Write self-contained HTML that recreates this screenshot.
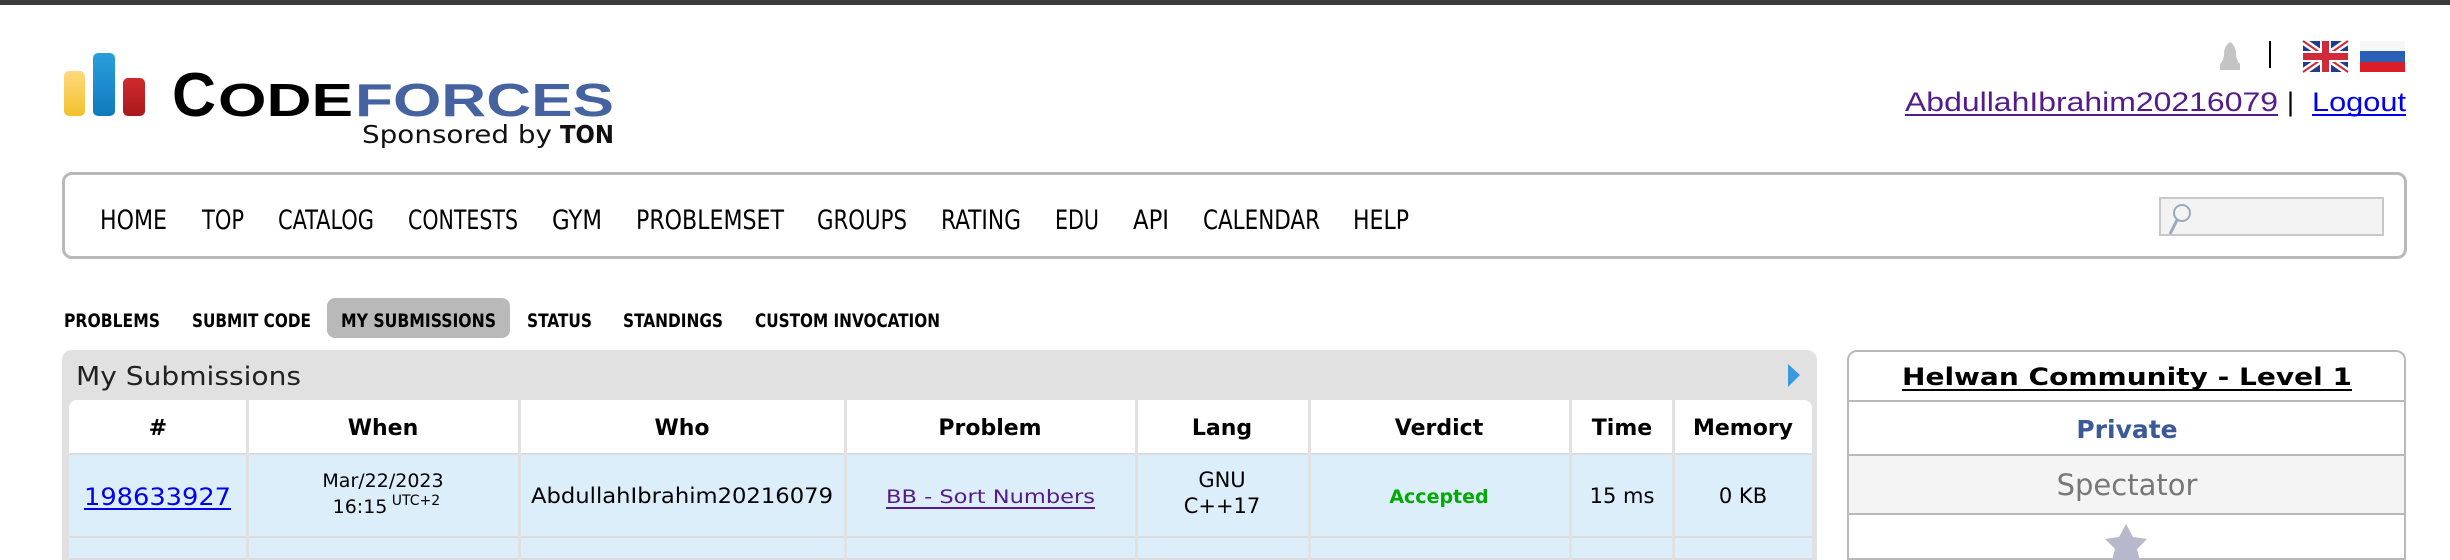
<!DOCTYPE html>
<html><head><meta charset="utf-8"><style>
*{margin:0;padding:0;box-sizing:border-box}
body{width:2450px;height:552px;overflow:hidden;background:#fff;position:relative;font-family:"Liberation Sans",sans-serif}
.a{position:absolute}
svg{position:absolute;overflow:visible}
.nav text{font-family:"Liberation Sans Narrow","DejaVu Sans Condensed","Liberation Sans",sans-serif;font-size:27px;fill:#000}
.sub text{font-family:"Liberation Sans Narrow","DejaVu Sans Condensed","Liberation Sans",sans-serif;font-size:19px;font-weight:bold;fill:#000}
.t text{font-family:"DejaVu Sans","Liberation Sans",sans-serif}
</style></head><body>
<div class="a" style="left:0;top:0;width:2450px;height:5px;background:#3b3b3b"></div>

<!-- logo -->
<div class="a" style="left:64px;top:71px;width:21px;height:45px;border-radius:5px;background:linear-gradient(#fdd97d,#f3c12d)"></div>
<div class="a" style="left:93px;top:53px;width:22px;height:63px;border-radius:5px;background:linear-gradient(#29a0dc,#1179bd)"></div>
<div class="a" style="left:123px;top:78px;width:22px;height:38px;border-radius:5px;background:linear-gradient(#d02a2e,#a8191d)"></div>
<svg width="2450" height="552" style="left:0;top:0">
<text x="172" y="116" font-family="Liberation Sans,sans-serif" font-weight="bold" font-size="62" fill="#000" textLength="44" lengthAdjust="spacingAndGlyphs">C</text>
<text x="218" y="116" font-family="Liberation Sans,sans-serif" font-weight="bold" font-size="46" fill="#000" textLength="135" lengthAdjust="spacingAndGlyphs">ODE</text>
<text x="355" y="116" font-family="Liberation Sans,sans-serif" font-weight="bold" font-size="46" fill="#4563a0" textLength="259" lengthAdjust="spacingAndGlyphs">FORCES</text>
<text x="362" y="143" font-family="DejaVu Sans,sans-serif" font-size="25" fill="#111" textLength="190" lengthAdjust="spacingAndGlyphs">Sponsored by</text>
<text x="560" y="143" font-family="DejaVu Sans,sans-serif" font-weight="bold" font-size="25" fill="#111" textLength="54" lengthAdjust="spacingAndGlyphs">TON</text>

<!-- top right -->
<path d="M2220 70 L2220 64 Q2224 60 2224 54 Q2224 46 2230 42 Q2236 46 2236 54 Q2236 60 2240 64 L2240 70 Z" fill="#c4c4c4"/>
<rect x="2269" y="41" width="2" height="27" fill="#000"/>
<g>
<rect x="2303" y="41" width="45" height="31" fill="#1f3d8c"/>
<path d="M2303 41 L2348 72 M2348 41 L2303 72" stroke="#fff" stroke-width="7"/>
<path d="M2303 41 L2348 72 M2348 41 L2303 72" stroke="#d12a3a" stroke-width="2"/>
<rect x="2320" y="41" width="11" height="31" fill="#fff"/>
<rect x="2303" y="51" width="45" height="11" fill="#fff"/>
<rect x="2322" y="41" width="7" height="31" fill="#d12a3a"/>
<rect x="2303" y="53" width="45" height="7" fill="#d12a3a"/>
</g>
<rect x="2360" y="41" width="45" height="10" fill="#f7f7f7"/>
<rect x="2360" y="51" width="45" height="11" fill="#2a5fb5"/>
<rect x="2360" y="62" width="45" height="10" fill="#d81e26"/>
<text x="1905" y="111" font-family="Liberation Sans,sans-serif" font-size="27" fill="#551a8b" textLength="373" lengthAdjust="spacingAndGlyphs">AbdullahIbrahim20216079</text>
<rect x="1905" y="114" width="373" height="2" fill="#551a8b"/>
<text x="2287" y="111" font-family="Liberation Sans,sans-serif" font-size="27" fill="#000">|</text>
<text x="2312" y="111" font-family="Liberation Sans,sans-serif" font-size="27" fill="#0000ee" textLength="94" lengthAdjust="spacingAndGlyphs">Logout</text>
<rect x="2312" y="114" width="94" height="2" fill="#0000ee"/>
</svg>

<!-- nav -->
<div class="a" style="left:62px;top:172px;width:2345px;height:87px;border:3px solid #b9b9b9;border-radius:10px;background:#fff"></div>
<div class="a" style="left:2159px;top:197px;width:225px;height:39px;border:2px solid #c8c8c8;background:#f3f3f3"></div>
<svg width="40" height="40" style="left:2162px;top:200px"><circle cx="20" cy="13" r="8" fill="none" stroke="#9ab" stroke-width="2"/><path d="M15 20 L8 34" stroke="#9ab" stroke-width="3"/></svg>
<svg class="nav" width="2450" height="552" style="left:0;top:0">
<text x="100" y="229" textLength="67" lengthAdjust="spacingAndGlyphs">HOME</text>
<text x="202" y="229" textLength="42" lengthAdjust="spacingAndGlyphs">TOP</text>
<text x="278" y="229" textLength="96" lengthAdjust="spacingAndGlyphs">CATALOG</text>
<text x="408" y="229" textLength="110" lengthAdjust="spacingAndGlyphs">CONTESTS</text>
<text x="552" y="229" textLength="50" lengthAdjust="spacingAndGlyphs">GYM</text>
<text x="636" y="229" textLength="148" lengthAdjust="spacingAndGlyphs">PROBLEMSET</text>
<text x="817" y="229" textLength="90" lengthAdjust="spacingAndGlyphs">GROUPS</text>
<text x="941" y="229" textLength="80" lengthAdjust="spacingAndGlyphs">RATING</text>
<text x="1055" y="229" textLength="44" lengthAdjust="spacingAndGlyphs">EDU</text>
<text x="1133" y="229" textLength="36" lengthAdjust="spacingAndGlyphs">API</text>
<text x="1203" y="229" textLength="117" lengthAdjust="spacingAndGlyphs">CALENDAR</text>
<text x="1353" y="229" textLength="56" lengthAdjust="spacingAndGlyphs">HELP</text>
</svg>

<!-- sub menu -->
<div class="a" style="left:327px;top:298px;width:183px;height:40px;background:#b9b9b9;border-radius:8px"></div>
<svg class="sub" width="2450" height="552" style="left:0;top:0">
<text x="64" y="327" textLength="96" lengthAdjust="spacingAndGlyphs">PROBLEMS</text>
<text x="192" y="327" textLength="119" lengthAdjust="spacingAndGlyphs">SUBMIT CODE</text>
<text x="341" y="327" textLength="155" lengthAdjust="spacingAndGlyphs">MY SUBMISSIONS</text>
<text x="527" y="327" textLength="65" lengthAdjust="spacingAndGlyphs">STATUS</text>
<text x="623" y="327" textLength="100" lengthAdjust="spacingAndGlyphs">STANDINGS</text>
<text x="755" y="327" textLength="185" lengthAdjust="spacingAndGlyphs">CUSTOM INVOCATION</text>
</svg>

<!-- main box -->
<div class="a" style="left:62px;top:350px;width:1755px;height:210px;background:#e1e1e1;border-radius:10px 10px 0 0"></div>
<div class="a" style="left:69px;top:400px;width:1743px;height:160px;background:#dcdcdc;border-radius:8px 8px 0 0"></div>
<div class="a" style="left:69px;top:400px;width:1743px;height:53px;background:#fff;border-radius:8px 8px 0 0"></div>
<div class="a" style="left:69px;top:455px;width:1743px;height:81px;background:#ddeefb"></div>
<div class="a" style="left:69px;top:538px;width:1743px;height:20px;background:#ddeefb"></div>
<svg class="t" width="2450" height="552" style="left:0;top:0">
<g fill="#e1e1e1">
<rect x="246" y="400" width="3" height="160"/><rect x="518" y="400" width="3" height="160"/>
<rect x="844" y="400" width="3" height="160"/><rect x="1135" y="400" width="3" height="160"/>
<rect x="1308" y="400" width="3" height="160"/><rect x="1569" y="400" width="3" height="160"/>
<rect x="1672" y="400" width="3" height="160"/>
</g>
<text x="76" y="385" font-family="DejaVu Sans,sans-serif" font-size="26" fill="#222" textLength="225" lengthAdjust="spacingAndGlyphs">My Submissions</text>
<path d="M1788 364 L1800 375 L1788 387 Z" fill="#3a98dc"/>
<g font-weight="bold" font-size="22" fill="#000" text-anchor="middle">
<text x="158" y="435">#</text><text x="383" y="435">When</text><text x="682" y="435">Who</text>
<text x="990" y="435">Problem</text><text x="1222" y="435">Lang</text><text x="1439" y="435">Verdict</text>
<text x="1622" y="435">Time</text><text x="1743" y="435">Memory</text>
</g>
<g font-size="21" fill="#000" text-anchor="middle">
<text x="383" y="487" font-size="19">Mar/22/2023</text>
<text x="360" y="513" font-size="19">16:15</text>
<text x="416" y="505" font-size="14">UTC+2</text>
<text x="682" y="503" textLength="302" lengthAdjust="spacingAndGlyphs">AbdullahIbrahim20216079</text>
<text x="1222" y="487">GNU</text><text x="1222" y="513">C++17</text>
<text x="1622" y="503">15 ms</text><text x="1743" y="503">0 KB</text>
<text x="1439" y="503" font-weight="bold" font-size="19" fill="#0a0">Accepted</text>
</g>
<text x="84" y="505" font-size="24" fill="#0000ee" textLength="147" lengthAdjust="spacingAndGlyphs">198633927</text>
<rect x="84" y="508" width="147" height="2" fill="#0000ee"/>
<text x="886" y="503" font-size="19" fill="#551a8b" textLength="209" lengthAdjust="spacingAndGlyphs">BB - Sort Numbers</text>
<rect x="886" y="507" width="209" height="2" fill="#551a8b"/>
</svg>

<!-- sidebar -->
<div class="a" style="left:1847px;top:350px;width:559px;height:210px;border:2px solid #b9b9b9;border-radius:10px 10px 0 0;background:#fff"></div>
<div class="a" style="left:1849px;top:456px;width:555px;height:57px;background:#f4f4f4"></div>
<div class="a" style="left:1849px;top:400px;width:555px;height:2px;background:#b9b9b9"></div>
<div class="a" style="left:1849px;top:454px;width:555px;height:2px;background:#b9b9b9"></div>
<div class="a" style="left:1849px;top:513px;width:555px;height:2px;background:#b9b9b9"></div>
<svg class="t" width="2450" height="552" style="left:0;top:0">
<text x="1902" y="385" font-weight="bold" font-size="24" fill="#000" textLength="450" lengthAdjust="spacingAndGlyphs">Helwan Community - Level 1</text>
<rect x="1902" y="389" width="450" height="2" fill="#000"/>
<text x="2127" y="438" text-anchor="middle" font-weight="bold" font-size="25" fill="#3b5998">Private</text>
<text x="2127" y="495" text-anchor="middle" font-size="29" fill="#777">Spectator</text>
<path d="M2126 524 L2133 537 L2147 539 L2137 549 L2140 560 L2112 560 L2115 549 L2105 539 L2119 537 Z" fill="#b8b8cc"/>
</svg>
</body></html>
